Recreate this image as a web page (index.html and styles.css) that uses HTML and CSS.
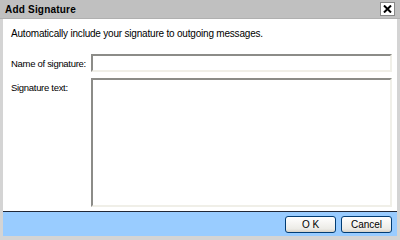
FILE: index.html
```html
<!DOCTYPE html>
<html lang="en">
<head>
    <meta charset="UTF-8">
    <title>Add Signature</title>
    <link rel="stylesheet" href="styles.css">
</head>
<body>
    <div class="dialog">
        <div class="titlebar">
            <span class="title">Add Signature</span>
            <span class="close-button">
                <svg width="9" height="8" viewBox="0 0 9 8"><path d="M1 0.5 L8 7.5 M8 0.5 L1 7.5" stroke="#000" stroke-width="2"/></svg>
            </span>
        </div>
        <div class="content">
            <p class="intro">Automatically include your signature to outgoing messages.</p>
            <div class="form-row">
                <label class="field-label">Name of signature:</label>
                <input type="text" class="field-input">
            </div>
            <div class="form-row grow">
                <label class="field-label">Signature text:</label>
                <textarea class="field-input field-area"></textarea>
            </div>
        </div>
        <div class="footer">
            <button class="dlg-button">O K</button>
            <button class="dlg-button">Cancel</button>
        </div>
    </div>
</body>
</html>
```

FILE: styles.css
```css
body {
    margin: 0;
    font-family: "Liberation Sans", sans-serif;
    font-size: 10px;
    background: #fff;
}
.dialog {
    width: 400px;
    height: 240px;
    box-sizing: border-box;
    display: flex;
    flex-direction: column;
    border-left: 3px solid #d4d4d4;
    border-right: 3px solid #d4d4d4;
    border-bottom: 4px solid #d4d4d4;
    background: #fff;
}
.titlebar {
    height: 18px;
    margin: 0 -3px;
    background: #c0c0c0;
    border-bottom: 1px solid #b0b0b0;
    display: flex;
    align-items: center;
    justify-content: space-between;
    padding: 0 5px 0 5px;
}
.title {
    font-weight: bold;
    font-size: 10px;
    color: #000;
    letter-spacing: 0.2px;
}
.close-button {
    width: 13px;
    height: 12px;
    background: #fff;
    border: 1px solid #888;
    display: flex;
    align-items: center;
    justify-content: center;
}
.content {
    flex-grow: 1;
    display: flex;
    flex-direction: column;
    padding: 0 5px 4px 8px;
}
.intro {
    margin: 9px 0 0 0;
    color: #000;
    height: 20px;
    letter-spacing: -0.2px;
}
.form-row {
    display: flex;
    margin-top: 6px;
}
.form-row.grow {
    flex-grow: 1;
    margin-top: 6px;
}
.field-label {
    width: 80px;
    flex-shrink: 0;
    padding-top: 4px;
    color: #000;
    white-space: nowrap;
    font-size: 9.5px;
    letter-spacing: -0.3px;
}
.field-input {
    flex-grow: 1;
    height: 18px;
    box-sizing: border-box;
    margin: 0;
    border-top: 2px solid #8c8c88;
    border-left: 2px solid #8c8c88;
    border-right: 2px solid #f0efe8;
    border-bottom: 2px solid #f0efe8;
    background: #fff;
    outline: none;
    resize: none;
}
.field-area {
    height: auto;
}
.footer {
    height: 24px;
    background: #99ccff;
    border-top: 1px solid #202838;
    display: flex;
    justify-content: flex-end;
    align-items: center;
    gap: 5px;
    padding-right: 5px;
}
.dlg-button {
    width: 51px;
    height: 17px;
    font-family: "Liberation Sans", sans-serif;
    font-size: 10px;
    color: #000;
    background: linear-gradient(#ffffff, #ecebe6 80%, #d6d0c5);
    border: 1px solid #003c74;
    border-radius: 3px;
    padding: 0;
}
```
